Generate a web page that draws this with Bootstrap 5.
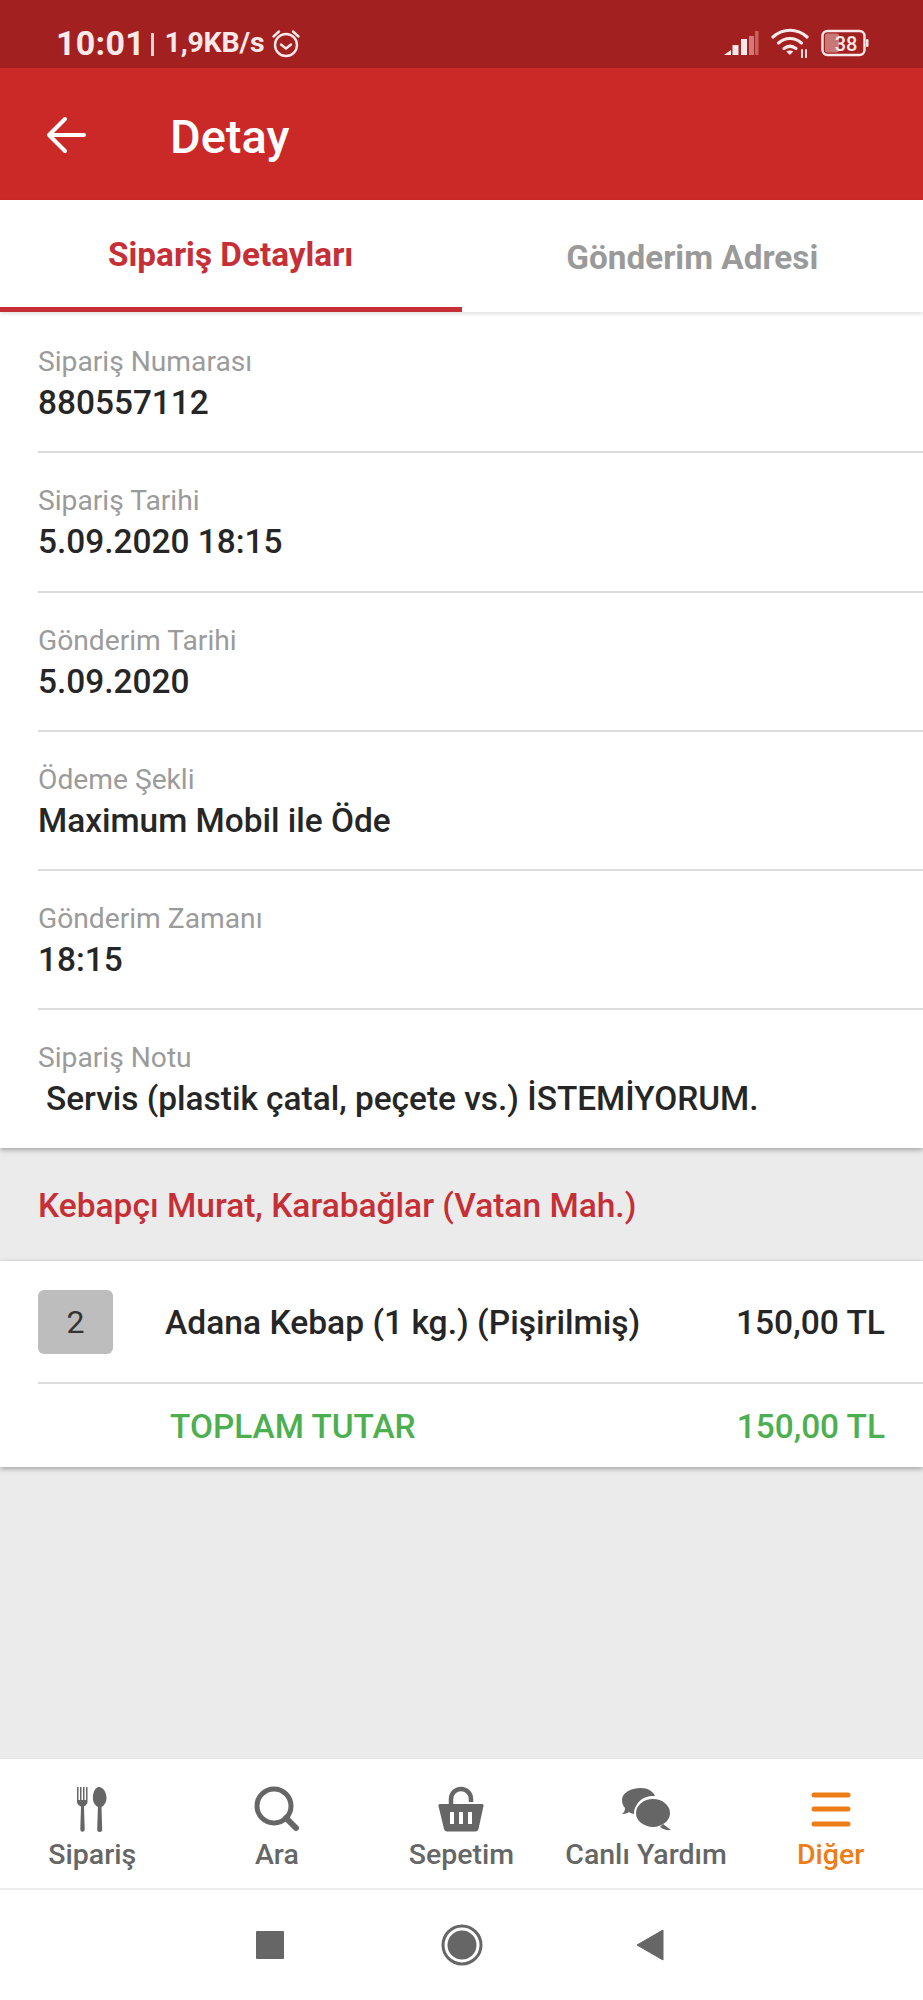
<!DOCTYPE html>
<html lang="tr">
<head>
<meta charset="utf-8">
<title>Detay</title>
<link rel="stylesheet" href="https://cdn.jsdelivr.net/npm/bootstrap@5.3.0/dist/css/bootstrap.min.css">
<style>
html,body{height:2000px;overflow:hidden}
body{font-family:Roboto,"Liberation Sans",sans-serif;background:#ebebeb;color:#212121}
.app-shell{height:2000px}
.status-strip{height:68px;background:#a32020;color:#fbe9e9;padding:18px 54px 0 56px}
.clock{font-size:34px;font-weight:700;line-height:1;letter-spacing:.3px;width:84px}
.bar-sep{width:2.5px;height:23px;background:#f3d5d5;margin:2px 11px 0 11px}
.net-speed{font-size:28.5px;font-weight:700;line-height:1;margin-right:7px;letter-spacing:-.2px}
.app-top{height:132px;background:#cb2828;color:#fff;padding-left:46px}
.back-arrow{margin-top:1px}
.page-title{font-size:47px;font-weight:500;margin:4px 0 0 84px;line-height:1}
.tab-strip{height:112px;background:#fff;box-shadow:0 2px 4px rgba(0,0,0,.12);position:relative;z-index:2}
.tab-cell{flex:0 0 50%;font-size:33.300px;font-weight:700;color:#9a9a9a;padding-top:3px}
.tab-cell.is-on{color:#c62f36;border-bottom:5px solid #c62f36}
.detail-card{background:#fff;padding-left:38px;padding-top:2px;box-shadow:0 2px 5px rgba(0,0,0,.3);position:relative;z-index:1}
.field-row{height:139.300px;border-bottom:2px solid #dcdcdc;padding-top:31px}
.field-row:last-child{border-bottom:0;height:138px}
.field-name{font-size:28.200px;line-height:34px;color:#9b9b9b}
.field-val{font-size:33.400px;font-weight:500;line-height:38px;color:#262626;margin-top:5px}
.note-val{padding-left:8px}
.shop-band{height:113px;padding-left:38px;padding-top:4px;font-size:33.500px;font-weight:500;color:#c62f36;background:#ebebeb;border-bottom:1px solid #e2e2e2}
.order-card{background:#fff;padding:0 38px;box-shadow:0 2px 5px rgba(0,0,0,.3)}
.order-line{height:123px;border-bottom:2px solid #dcdcdc;margin-right:-38px;padding-right:38px}
.qty-chip{width:75px;height:64px;background:#bdbdbd;border-radius:6px;font-size:32px;color:#333;margin-right:52px}
.line-name,.line-price{font-size:33.600px;font-weight:500;color:#262626;padding-top:3px}
.total-line{height:83px;font-size:33.400px;font-weight:500;color:#4caf50;padding-left:132px;padding-top:3px}
.tab-foot{height:132px;background:#fff;border-top:1px solid #e4e4e4;border-bottom:2px solid #ececec;padding-top:27px}
.foot-item{flex:1 1 0;font-size:28.500px;font-weight:500;color:#666;line-height:30px}
.foot-item svg{display:block;height:46px;margin-bottom:8px}
.foot-item.is-on{color:#ed7d17}
.sys-nav{height:110px;background:#fff;padding-left:256px}
.sys-b{margin-left:157px}
.sys-c{margin-left:153px}
</style>
</head>
<body>
<div class="app-shell d-flex flex-column">
  <div class="status-strip d-flex align-items-center flex-shrink-0">
    <span class="clock">10:01</span><span class="bar-sep"></span><span class="net-speed">1,9KB/s</span>
    <svg width="30" height="30" viewBox="0 0 30 30" fill="none" stroke="#fbe9e9" stroke-width="2.4"><circle cx="15" cy="17" r="11"/><path d="M10 16.500l5 4 5-4" stroke-linecap="round" stroke-linejoin="round"/><path d="M2.500 8.500 8 3.500M27.500 8.500 22 3.500" stroke-linecap="round"/></svg>
    <span class="status-right ms-auto d-flex align-items-center gap-2">
      <svg width="36" height="26" viewBox="0 0 36 26" class="me-1"><path d="M1 25l7-5v5z" fill="#fbe9e9"/><rect x="9.500" y="15" width="6" height="10" fill="#fbe9e9"/><rect x="18" y="9" width="6" height="16" fill="#fbe9e9"/><rect x="26" y="6" width="5" height="19" fill="#d27a7a"/><rect x="32" y="1" width="3.500" height="24" fill="#c86060"/></svg>
      <svg width="38" height="30" viewBox="0 0 38 30" fill="none" stroke="#fbe9e9" stroke-width="3.200" stroke-linecap="round" class="me-1"><path d="M2 9c10-9 24-9 34 0"/><path d="M7.500 15c7-6 16-6 23 0"/><path d="M13 20.500c4-3 8-3 12 0"/><path d="M18.800 27l-3.500-3.500c2-1.500 5-1.500 7 0z" fill="#fbe9e9" stroke="none"/><path d="M31 22v8M35 22v8" stroke-width="1.800"/></svg>
      <svg width="48" height="28" viewBox="0 0 48 28"><rect x="1.500" y="2" width="42" height="24" rx="5" fill="none" stroke="#fbe9e9" stroke-width="2.400"/><rect x="4" y="4.500" width="14" height="19" rx="2" fill="#c97878"/><rect x="45" y="10" width="2.500" height="8" rx="1" fill="#fbe9e9"/><text x="25" y="21.500" font-size="20" font-weight="500" fill="#fbe9e9" font-family="Roboto,sans-serif" text-anchor="middle">38</text></svg>
    </span>
  </div>
  <div class="app-top d-flex align-items-center flex-shrink-0">
    <svg class="back-arrow" width="40" height="38" viewBox="0 0 40 38" fill="none" stroke="#fff" stroke-width="4" stroke-linecap="round" stroke-linejoin="round"><path d="M38 19H3M19 3 3 19l16 16"/></svg>
    <h1 class="page-title">Detay</h1>
  </div>
  <div class="tab-strip d-flex flex-shrink-0">
    <div class="tab-cell is-on d-flex align-items-center justify-content-center">Sipariş Detayları</div>
    <div class="tab-cell d-flex align-items-center justify-content-center">Gönderim Adresi</div>
  </div>
  <div class="detail-card flex-shrink-0">
    <div class="field-row"><div class="field-name">Sipariş Numarası</div><div class="field-val">880557112</div></div>
    <div class="field-row"><div class="field-name">Sipariş Tarihi</div><div class="field-val">5.09.2020 18:15</div></div>
    <div class="field-row"><div class="field-name">Gönderim Tarihi</div><div class="field-val">5.09.2020</div></div>
    <div class="field-row"><div class="field-name">Ödeme Şekli</div><div class="field-val">Maximum Mobil ile Öde</div></div>
    <div class="field-row"><div class="field-name">Gönderim Zamanı</div><div class="field-val">18:15</div></div>
    <div class="field-row"><div class="field-name">Sipariş Notu</div><div class="field-val note-val">Servis (plastik çatal, peçete vs.) İSTEMİYORUM.</div></div>
  </div>
  <div class="shop-band d-flex align-items-center flex-shrink-0">Kebapçı Murat, Karabağlar (Vatan Mah.)</div>
  <div class="order-card flex-shrink-0">
    <div class="order-line d-flex align-items-center">
      <div class="qty-chip d-flex align-items-center justify-content-center">2</div>
      <div class="line-name">Adana Kebap (1 kg.) (Pişirilmiş)</div>
      <div class="line-price ms-auto">150,00 TL</div>
    </div>
    <div class="total-line d-flex align-items-center"><span>TOPLAM TUTAR</span><span class="ms-auto">150,00 TL</span></div>
  </div>
  <div class="flex-grow-1"></div>
  <div class="tab-foot d-flex flex-shrink-0">
    <div class="foot-item text-center"><svg class="mx-auto" width="46" height="46" viewBox="-3 0 46 46" fill="#666"><path d="M5 1h1.500v13h1.500V1h1.500v13H11V1h1.500v13H14V1h1.500v15c0 2-2 3.500-3.500 4.500l.7 23a2.200 2.200 0 0 1-4.400 0l.7-23C7 19.500 5 18 5 16z"/><path d="M27 1c4 0 7.500 5 7.500 11 0 5-3 8-5 9l.7 22.500a2.500 2.500 0 0 1-5 0l.7-22.500c-2-1-5-4-5-9 0-6 2.500-11 6-11z"/></svg>Sipariş</div>
    <div class="foot-item text-center"><svg class="mx-auto" width="46" height="46" viewBox="0 0 46 46" fill="none" stroke="#666"><circle cx="20" cy="20" r="17" stroke-width="5"/><path d="M32 32l10 10" stroke-width="6" stroke-linecap="round"/></svg>Ara</div>
    <div class="foot-item text-center"><svg class="mx-auto" width="46" height="46" viewBox="0 0 46 46"><path fill="none" stroke="#666" stroke-width="4.500" d="M13 18v-5a10 10 0 0 1 20 0v3"/><path fill="#666" fill-rule="evenodd" d="M2 18h42a1.500 1.500 0 0 1 1.500 2l-5 23c-.3 1.500-1.500 2.500-3 2.500H9c-1.500 0-2.700-1-3-2.500L.5 20A1.500 1.500 0 0 1 2 18zM12 26v12h4V26zM21 26v12h4V26zM30 26v12h4V26z"/></svg>Sepetim</div>
    <div class="foot-item text-center"><svg class="mx-auto" width="50" height="46" viewBox="0 0 50 46" fill="#666"><path d="M20 2c7 0 12 3.500 14 8-10-1-21 5-19 18-3 0-5-.5-7-2-2 1.500-4.500 2-7 2 2-1.500 3-3.500 3-6-2-2-3-5-3-8C1 7 9 2 20 2z"/><ellipse cx="32" cy="27" rx="18" ry="15" fill="#666" stroke="#fff" stroke-width="2"/><path d="M42 38l8 6c-4 .5-8-.5-11-3z"/></svg>Canlı Yardım</div>
    <div class="foot-item is-on text-center"><svg class="mx-auto" width="40" height="46" viewBox="0 0 40 46" stroke="#ed7d17" stroke-width="5" stroke-linecap="round"><path d="M3 9h34M3 23h34M3 38h34"/></svg>Diğer</div>
  </div>
  <div class="sys-nav d-flex align-items-center flex-shrink-0">
    <svg width="28" height="28" viewBox="0 0 28 28"><rect width="28" height="28" rx="1" fill="#666"/></svg>
    <svg class="sys-b" width="42" height="42" viewBox="0 0 42 42"><circle cx="21" cy="21" r="19" fill="none" stroke="#666" stroke-width="3"/><circle cx="21" cy="21" r="14.500" fill="#666"/></svg>
    <svg class="sys-c" width="28" height="32" viewBox="0 0 28 32"><path d="M27 1v30L1 16z" fill="#666" stroke="#666" stroke-linejoin="round"/></svg>
  </div>
</div>
<script src="https://cdn.jsdelivr.net/npm/bootstrap@5.3.0/dist/js/bootstrap.bundle.min.js"></script>
</body>
</html>
